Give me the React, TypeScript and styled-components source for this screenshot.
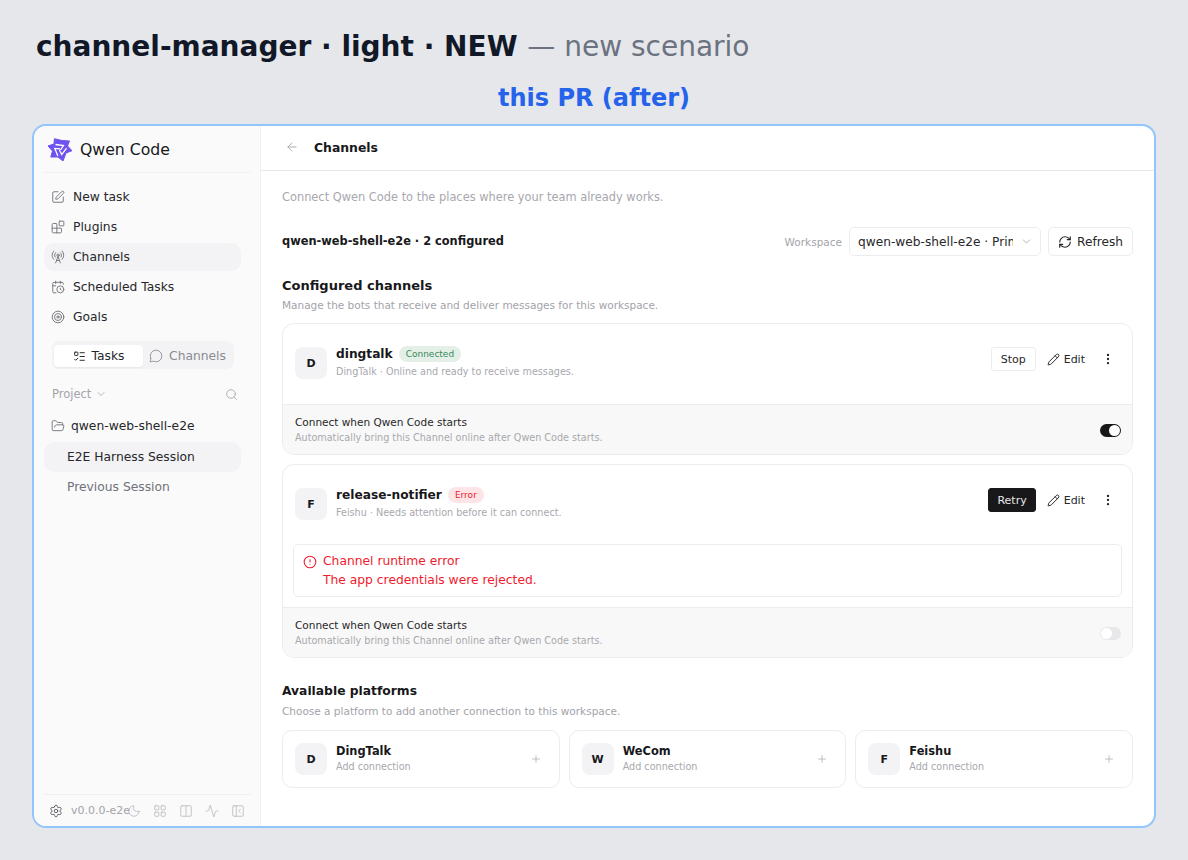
import styled, { createGlobalStyle } from "styled-components";
import {
  Activity,
  ArrowLeft,
  Blocks,
  CalendarClock,
  ChevronDown,
  CircleAlert,
  Columns2,
  EllipsisVertical,
  FolderOpen,
  LayoutGrid,
  ListTodo,
  MessageCircle,
  Moon,
  PanelLeftClose,
  Pencil,
  Plus,
  RadioTower,
  RefreshCw,
  Search,
  Settings,
  SquarePen,
  Target,
} from "lucide-react";

const GlobalStyle = createGlobalStyle`
  html, body {
    margin: 0;
    padding: 0;
    background: #e5e7eb;
    font-family: "DejaVu Sans", sans-serif;
  }
`;

const Page = styled.div`
  width: 1188px;
  height: 860px;
  box-sizing: border-box;
  padding: 29px 32px 0 32px;
  overflow: hidden;
`;

const Title = styled.h1`
  margin: 0 0 0 4px;
  font-size: 28px;
  line-height: 36px;
  font-weight: 700;
  color: #111827;
  white-space: nowrap;

  span {
    font-weight: 400;
    color: #6b7280;
  }
`;

const Caption = styled.div`
  margin-top: 17px;
  text-align: center;
  font-size: 24px;
  line-height: 32px;
  font-weight: 700;
  color: #2563eb;
`;

const Frame = styled.div`
  margin-top: 10px;
  height: 704px;
  box-sizing: border-box;
  border: 2px solid #93c5fd;
  border-radius: 14px;
  background: #fff;
  display: flex;
  overflow: hidden;
`;

const Sidebar = styled.aside`
  width: 227px;
  flex: none;
  box-sizing: border-box;
  background: #fafafa;
  border-right: 1px solid #f0f0f1;
  padding: 0 9px 0 10px;
  display: flex;
  flex-direction: column;
`;

const Brand = styled.div`
  height: 46px;
  display: flex;
  align-items: center;
  gap: 8px;
  padding: 0 0 0 4px;
  font-size: 15.7px;
  color: #18181b;
  border-bottom: 1px solid #f0f0f1;
`;

const Nav = styled.nav`
  margin-top: 10px;
  width: 197px;
  display: flex;
  flex-direction: column;
  gap: 2px;
`;

const NavItem = styled.div<{ $active?: boolean }>`
  height: 28px;
  display: flex;
  align-items: center;
  gap: 8px;
  padding-left: 7px;
  border-radius: 10px;
  font-size: 12.3px;
  color: #27272a;
  background: ${(p) => (p.$active ? "#f3f3f5" : "transparent")};

  svg {
    color: #6b6b73;
  }
`;

const Tabs = styled.div`
  margin: 10px 0 0 8px;
  width: 182px;
  height: 28px;
  box-sizing: border-box;
  padding: 4px 2px 2px;
  display: flex;
  border-radius: 7px;
  background: #f3f3f5;
`;

const Tab = styled.div<{ $active?: boolean }>`
  width: 89px;
  display: flex;
  align-items: center;
  justify-content: center;
  gap: 6px;
  border-radius: 4px;
  font-size: 12.3px;
  color: ${(p) => (p.$active ? "#27272a" : "#8a8a92")};
  background: ${(p) => (p.$active ? "#fff" : "transparent")};
  box-shadow: ${(p) => (p.$active ? "0 1px 2px rgba(0,0,0,.05)" : "none")};
`;

const ProjectRow = styled.div`
  margin-top: 15px;
  width: 197px;
  height: 20px;
  box-sizing: border-box;
  padding: 0 3px 0 8px;
  display: flex;
  align-items: center;
  gap: 4px;
  font-size: 11.5px;
  color: #a3a3aa;

  svg:last-child {
    margin-left: auto;
  }
`;

const FolderRow = styled.div`
  margin-top: 12px;
  height: 20px;
  display: flex;
  align-items: center;
  gap: 6px;
  padding-left: 7px;
  font-size: 12.3px;
  color: #27272a;

  svg {
    color: #6b6b73;
  }
`;

const Sessions = styled.div`
  margin-top: 6px;
  width: 197px;
  display: flex;
  flex-direction: column;
`;

const Session = styled.div<{ $active?: boolean }>`
  height: ${(p) => (p.$active ? "30px" : "29px")};
  display: flex;
  align-items: center;
  padding-left: 23px;
  border-radius: 10px;
  font-size: 12.3px;
  color: ${(p) => (p.$active ? "#27272a" : "#71717a")};
  background: ${(p) => (p.$active ? "#f3f3f5" : "transparent")};
`;

const Footer = styled.div`
  margin-top: auto;
  height: 32px;
  box-sizing: border-box;
  border-top: 1px solid #f0f0f1;
  display: flex;
  align-items: center;
  padding: 0 6px 0 5px;
  color: #b4b4ba;
`;

const Version = styled.span`
  margin-left: 8px;
  width: 56px;
  font-size: 11px;
  color: #a3a3aa;
  white-space: nowrap;
`;

const FooterIcons = styled.div`
  display: flex;
  flex: 1;
  justify-content: space-between;
`;

const Main = styled.main`
  flex: 1;
  min-width: 0;
  display: flex;
  flex-direction: column;
`;

const Header = styled.header`
  height: 45px;
  flex: none;
  box-sizing: border-box;
  padding: 0 0 2px 24px;
  display: flex;
  align-items: center;
  gap: 15px;
  border-bottom: 1px solid #e8e8ea;
  font-size: 12.4px;
  font-weight: 700;
  color: #18181b;

  svg {
    color: #a3a3aa;
  }
`;

const Content = styled.div`
  padding: 19px 21px 0 21px;
`;

const Muted = styled.p`
  margin: 0;
  font-size: 10.5px;
  line-height: 14px;
  color: #a3a3aa;
`;

const Lead = styled(Muted)`
  font-size: 11.4px;
  color: #a8a8ae;
`;

const Toolbar = styled.div`
  margin-top: 23px;
  display: flex;
  align-items: center;
  height: 29px;
`;

const Summary = styled.div`
  font-size: 11.4px;
  font-weight: 700;
  color: #18181b;
  margin: 0 auto 2px 0;
`;

const FieldLabel = styled.span`
  font-size: 10.5px;
  color: #a3a3aa;
  margin-right: 7px;
`;

const Select = styled.div`
  width: 192px;
  height: 29px;
  box-sizing: border-box;
  border: 1px solid #ececee;
  border-radius: 5px;
  background: #fff;
  display: flex;
  align-items: center;
  padding: 0 7px 0 8px;
  font-size: 12.2px;
  color: #27272a;

  span {
    width: 155px;
    overflow: hidden;
    white-space: nowrap;
  }

  svg {
    margin-left: auto;
    color: #9a9aa2;
  }
`;

const RefreshButton = styled.div`
  margin-left: 7px;
  width: 85px;
  height: 29px;
  box-sizing: border-box;
  border: 1px solid #ececee;
  border-radius: 5px;
  display: flex;
  align-items: center;
  justify-content: center;
  gap: 5px;
  font-size: 12.2px;
  color: #27272a;
`;

const SectionTitle = styled.h2<{ $gap: number; $after: number; $size: number }>`
  margin: ${(p) => p.$gap}px 0 ${(p) => p.$after}px;
  font-size: ${(p) => p.$size}px;
  line-height: 18px;
  font-weight: 700;
  color: #18181b;
`;

const Card = styled.section`
  margin-top: 11px;
  box-sizing: border-box;
  border: 1px solid #ececee;
  border-radius: 12px;
  overflow: hidden;
  background: #fff;

  & + & {
    margin-top: 9px;
  }
`;

const CardTop = styled.div<{ $short?: boolean }>`
  height: ${(p) => (p.$short ? "79px" : "80px")};
  box-sizing: border-box;
  padding: 23px 12px 0 12px;
  display: flex;
  align-items: flex-start;
`;

const Avatar = styled.div`
  width: 32px;
  height: 32px;
  flex: none;
  border-radius: 8px;
  background: #f3f3f5;
  display: flex;
  align-items: center;
  justify-content: center;
  font-size: 11px;
  font-weight: 700;
  color: #18181b;
`;

const CardText = styled.div`
  margin-left: 9px;
  flex: 1;
  min-width: 0;
`;

const NameRow = styled.div`
  display: flex;
  align-items: center;
  gap: 6px;
  height: 16px;
  margin-top: -1px;
  font-size: 12.2px;
  font-weight: 700;
  color: #18181b;
`;

const Badge = styled.span<{ $tone: "ok" | "bad" }>`
  height: 16px;
  padding: 0 7px;
  display: inline-flex;
  align-items: center;
  border-radius: 8px;
  font-size: 9px;
  font-weight: 400;
  color: ${(p) => (p.$tone === "ok" ? "#3a8a5c" : "#ef1c2e")};
  background: ${(p) => (p.$tone === "ok" ? "#e3efe7" : "#fde4e6")};
`;

const Small = styled.p`
  margin: 3px 0 0;
  font-size: 9.65px;
  line-height: 13px;
  color: #a8a8ae;
`;

const AutoHint = styled(Small)`
  margin: 1px 0 0;
`;

const Actions = styled.div`
  display: flex;
  align-items: center;
  height: 24px;
  color: #27272a;
`;

const ActionButton = styled.div<{ $dark?: boolean }>`
  height: 24px;
  box-sizing: border-box;
  padding: 0 ${(p) => (p.$dark ? "8px" : "9px")};
  display: flex;
  align-items: center;
  border-radius: 3px;
  font-size: 11px;
  border: 1px solid ${(p) => (p.$dark ? "#18181b" : "#ececee")};
  background: ${(p) => (p.$dark ? "#18181b" : "#fff")};
  color: ${(p) => (p.$dark ? "#e8e8ea" : "#27272a")};
`;

const EditLink = styled.div`
  margin-left: 11px;
  display: flex;
  align-items: center;
  gap: 4px;
  font-size: 11px;
`;

const More = styled.div`
  margin-left: 16px;
  margin-right: 5px;
  display: flex;
`;

const ErrorBox = styled.div`
  margin: 0 10px 10px;
  height: 53px;
  box-sizing: border-box;
  border: 1px solid #ececee;
  border-radius: 5px;
  padding: 7px 9px;
  display: grid;
  grid-template-columns: 14px 1fr;
  column-gap: 6px;
  font-size: 12.3px;
  line-height: 19px;
  color: #ef1c2e;

  svg {
    align-self: center;
  }
`;

const AutoRow = styled.div`
  height: 50px;
  box-sizing: border-box;
  padding: 9.5px 12px 0;
  display: flex;
  border-top: 1px solid #ececee;
  background: #f8f8f8;
`;

const AutoText = styled.div`
  flex: 1;
  font-size: 10.5px;
  line-height: 15px;
  color: #27272a;
`;

const Switch = styled.div<{ $on?: boolean }>`
  position: relative;
  margin: 9px -1px 0 0;
  width: 21px;
  height: 13px;
  border-radius: 7px;
  background: ${(p) => (p.$on ? "#18181b" : "#e8e8ea")};

  &::after {
    content: "";
    position: absolute;
    top: 1px;
    left: ${(p) => (p.$on ? "9px" : "1px")};
    width: 11px;
    height: 11px;
    border-radius: 50%;
    background: #fff;
  }
`;

const PlatformGrid = styled.div`
  margin-top: 12px;
  display: grid;
  grid-template-columns: repeat(3, 1fr);
  gap: 9px;
`;

const Platform = styled.div`
  height: 58px;
  box-sizing: border-box;
  border: 1px solid #ececee;
  border-radius: 10px;
  padding: 0 17px 0 12px;
  display: flex;
  align-items: center;
  color: #a3a3aa;
`;

const PlatformText = styled(CardText)`
  margin-bottom: 2px;
`;

const PlatformName = styled.div`
  font-size: 11.4px;
  line-height: 14px;
  font-weight: 700;
  color: #18181b;
`;

const PlatformHint = styled.div`
  margin-top: 3px;
  font-size: 9.65px;
  line-height: 12px;
  color: #a8a8ae;
`;

function QwenLogo() {
  return (
    <svg width="24" height="24" viewBox="0 0 24 24" aria-hidden="true">
      <path
        d="M6.4 1.7 14 3.5 21.5 4 19.5 9 24 13.7 18 16 15 24 10 20 2.8 20 4.5 14 0 8.9 6 7Z"
        fill="#6f52f0"
        stroke="#6f52f0"
        strokeLinejoin="round"
      />
      {[0, 120, 240].map((a) => (
        <path
          key={a}
          d="M7.5 7.5 15.5 8.5 12.5 13"
          transform={`rotate(${a} 12 12.5)`}
          fill="none"
          stroke="#fff"
          strokeWidth="1.3"
        />
      ))}
    </svg>
  );
}

function AutoConnect({ on }: { on?: boolean }) {
  return (
    <AutoRow>
      <AutoText>
        Connect when Qwen Code starts
        <AutoHint>Automatically bring this Channel online after Qwen Code starts.</AutoHint>
      </AutoText>
      <Switch $on={on} />
    </AutoRow>
  );
}

const platforms = [
  { letter: "D", name: "DingTalk" },
  { letter: "W", name: "WeCom" },
  { letter: "F", name: "Feishu" },
];

export default function App() {
  return (
    <Page>
      <GlobalStyle />
      <Title>
        channel-manager · light · NEW <span>— new scenario</span>
      </Title>
      <Caption>this PR (after)</Caption>
      <Frame>
        <Sidebar>
          <Brand>
            <QwenLogo />
            Qwen Code
          </Brand>
          <Nav>
            <NavItem>
              <SquarePen size={14} strokeWidth={1.5} />
              New task
            </NavItem>
            <NavItem>
              <Blocks size={14} strokeWidth={1.5} />
              Plugins
            </NavItem>
            <NavItem $active>
              <RadioTower size={14} strokeWidth={1.5} />
              Channels
            </NavItem>
            <NavItem>
              <CalendarClock size={14} strokeWidth={1.5} />
              Scheduled Tasks
            </NavItem>
            <NavItem>
              <Target size={14} strokeWidth={1.5} />
              Goals
            </NavItem>
          </Nav>
          <Tabs>
            <Tab $active>
              <ListTodo size={13} strokeWidth={1.8} />
              Tasks
            </Tab>
            <Tab>
              <MessageCircle size={14} strokeWidth={1.5} />
              Channels
            </Tab>
          </Tabs>
          <ProjectRow>
            Project
            <ChevronDown size={12} strokeWidth={1.5} />
            <Search size={13} strokeWidth={1.5} />
          </ProjectRow>
          <FolderRow>
            <FolderOpen size={14} strokeWidth={1.5} />
            qwen-web-shell-e2e
          </FolderRow>
          <Sessions>
            <Session $active>E2E Harness Session</Session>
            <Session>Previous Session</Session>
          </Sessions>
          <Footer>
            <Settings size={14} strokeWidth={1.5} color="#52525b" />
            <Version>v0.0.0-e2e</Version>
            <FooterIcons>
              <Moon size={14} strokeWidth={1.3} />
              <LayoutGrid size={14} strokeWidth={1.3} />
              <Columns2 size={14} strokeWidth={1.3} />
              <Activity size={14} strokeWidth={1.3} />
              <PanelLeftClose size={14} strokeWidth={1.3} />
            </FooterIcons>
          </Footer>
        </Sidebar>
        <Main>
          <Header>
            <ArrowLeft size={14} strokeWidth={1.5} />
            Channels
          </Header>
          <Content>
            <Lead>Connect Qwen Code to the places where your team already works.</Lead>
            <Toolbar>
              <Summary>qwen-web-shell-e2e · 2 configured</Summary>
              <FieldLabel>Workspace</FieldLabel>
              <Select>
                <span>qwen-web-shell-e2e · Primary</span>
                <ChevronDown size={13} strokeWidth={1.3} />
              </Select>
              <RefreshButton>
                <RefreshCw size={14} strokeWidth={2} />
                Refresh
              </RefreshButton>
            </Toolbar>
            <SectionTitle $gap={21} $after={3} $size={13}>
              Configured channels
            </SectionTitle>
            <Muted>Manage the bots that receive and deliver messages for this workspace.</Muted>
            <Card>
              <CardTop>
                <Avatar>D</Avatar>
                <CardText>
                  <NameRow>
                    dingtalk
                    <Badge $tone="ok">Connected</Badge>
                  </NameRow>
                  <Small>DingTalk · Online and ready to receive messages.</Small>
                </CardText>
                <Actions>
                  <ActionButton>Stop</ActionButton>
                  <EditLink>
                    <Pencil size={13} strokeWidth={1.8} />
                    Edit
                  </EditLink>
                  <More>
                    <EllipsisVertical size={14} strokeWidth={2} />
                  </More>
                </Actions>
              </CardTop>
              <AutoConnect on />
            </Card>
            <Card>
              <CardTop $short>
                <Avatar>F</Avatar>
                <CardText>
                  <NameRow>
                    release-notifier
                    <Badge $tone="bad">Error</Badge>
                  </NameRow>
                  <Small>Feishu · Needs attention before it can connect.</Small>
                </CardText>
                <Actions>
                  <ActionButton $dark>Retry</ActionButton>
                  <EditLink>
                    <Pencil size={13} strokeWidth={1.8} />
                    Edit
                  </EditLink>
                  <More>
                    <EllipsisVertical size={14} strokeWidth={2} />
                  </More>
                </Actions>
              </CardTop>
              <ErrorBox>
                <CircleAlert size={14} strokeWidth={1.8} />
                <span>Channel runtime error</span>
                <span />
                <span>The app credentials were rejected.</span>
              </ErrorBox>
              <AutoConnect />
            </Card>
            <SectionTitle $gap={24} $after={4} $size={12.3}>
              Available platforms
            </SectionTitle>
            <Muted>Choose a platform to add another connection to this workspace.</Muted>
            <PlatformGrid>
              {platforms.map((p) => (
                <Platform key={p.name}>
                  <Avatar>{p.letter}</Avatar>
                  <PlatformText>
                    <PlatformName>{p.name}</PlatformName>
                    <PlatformHint>Add connection</PlatformHint>
                  </PlatformText>
                  <Plus size={12} strokeWidth={1.3} />
                </Platform>
              ))}
            </PlatformGrid>
          </Content>
        </Main>
      </Frame>
    </Page>
  );
}
